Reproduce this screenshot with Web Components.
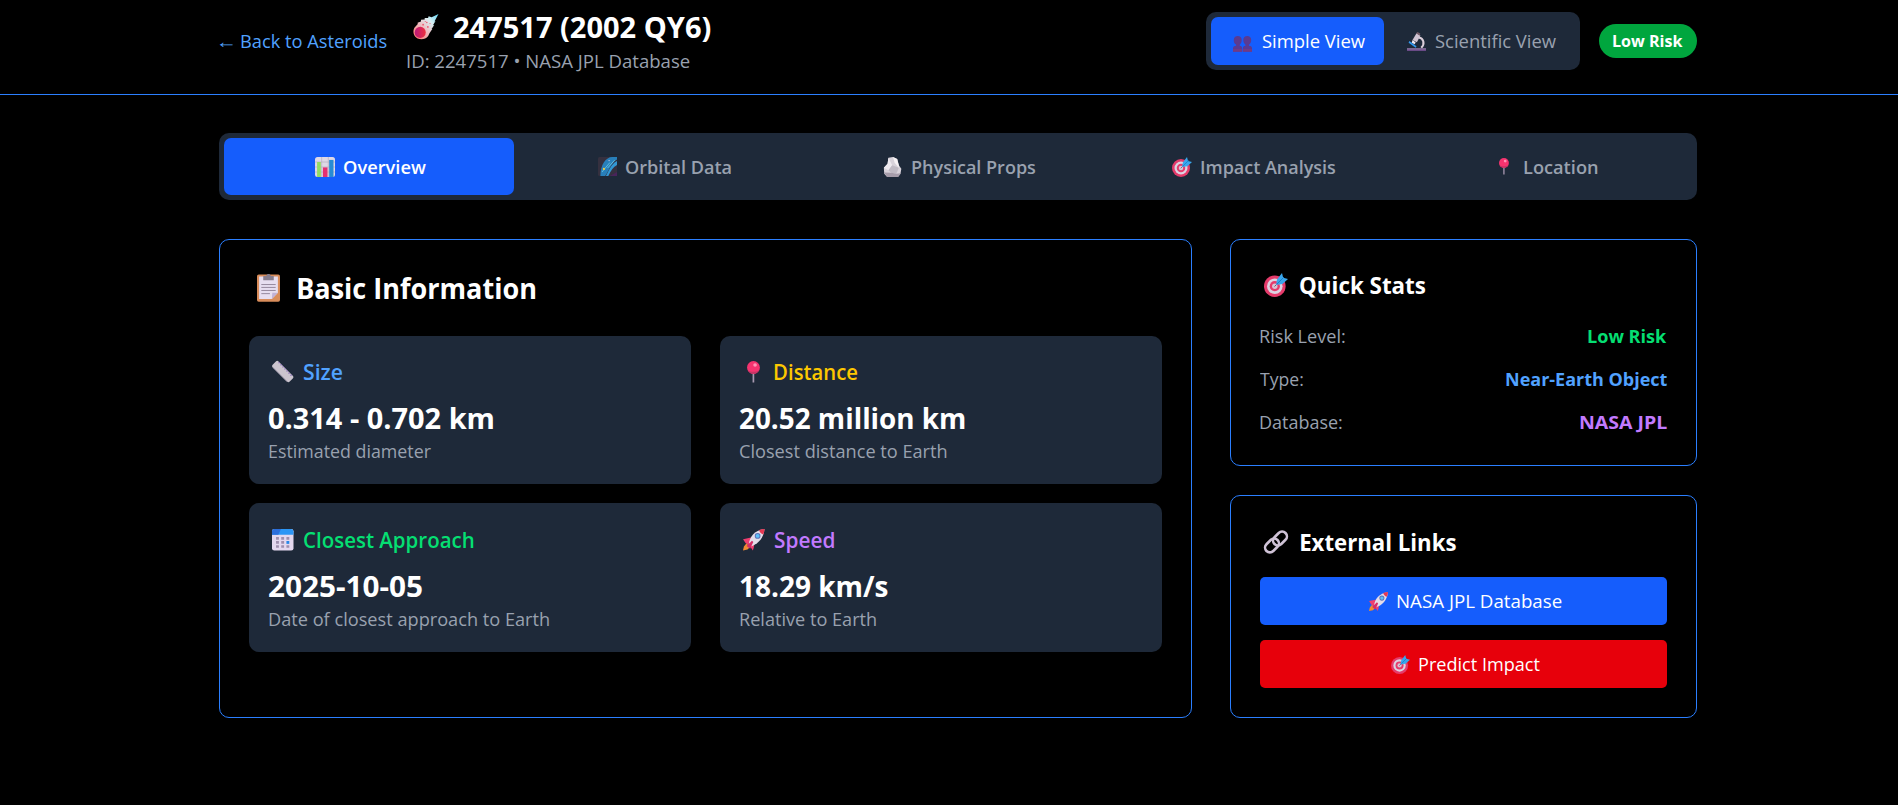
<!DOCTYPE html>
<html lang="en">
<head>
<meta charset="utf-8">
<title>247517 (2002 QY6)</title>
<style>
html,body{margin:0;background:#000}
body{font-family:"Open Sans","Noto Sans",sans-serif;color:#fff;height:805px;overflow:hidden}
</style>
</head>
<body>
<asteroid-page></asteroid-page>
<script>
const ICONS = {
  comet: `<defs><linearGradient id="a" x1="1" y1="0" x2="0" y2="1"><stop stop-color="#5fd4f5"/><stop offset=".3" stop-color="#d9f0f4"/><stop offset=".6" stop-color="#f0b9bd"/><stop offset="1" stop-color="#ff6a5e"/></linearGradient><linearGradient id="b" x1="0" y1=".5" x2="1" y2=".5"><stop stop-color="#b8187c"/><stop offset="1" stop-color="#f0303c"/></linearGradient></defs><path fill="url(#a)" d="M24 0 20.2 7 21.2 6.600 18.800 10.500 20 10.300 17.500 14 18.200 14 15.500 18 14.300 20.700C12 23.600 8 24.600 4.300 23 .6 21.200-.6 16.500 1.300 13L4.500 9.500 4.300 8.300 7.500 7 7.500 5.500 11 5.200 11 3.700 14.200 3.800 14.700 2 17.500 3Z"/><g fill="#f0526b"><circle cx="9.500" cy="10" r=".8"/><circle cx="13" cy="8" r=".7"/><circle cx="14" cy="12.200" r=".8"/><circle cx="11.500" cy="7" r=".5"/><circle cx="16" cy="9" r=".5"/></g><circle cx="6.800" cy="17.300" r="5.200" fill="url(#b)"/>`,
  people: `<g fill="#5a3a92"><path d="M0 20v-4.500c0-2 1.500-3 4-3.300V11C1.500 9.500 1 7.500 1 5 1 1.500 3 0 6 0s5 1.500 5 5c0 2.500-1 4.500-2.500 6v1.200c2 .3 3 1.300 3 3.300V20z"/><path d="M12.500 20v-4.500c0-2 1-3 3.300-3.300V11C14 9.500 13 7.500 13 5c0-3.500 2-5 5-5s5 1.500 5 5c0 2.500-1 4.500-2.800 6v1.200c2.500.3 3.800 1.300 3.800 3.300V20z"/></g><path fill="#7a3a80" d="M0 20v-3.500h11.500V20zM12.500 20v-3.500H24V20z" opacity=".7"/>`,
  micro: `<path d="M15 7c6 1 8 8 3 13" fill="none" stroke="#dccfda" stroke-width="2.600"/><path d="m7 10 5-8.500 5 3-4.500 8.500z" fill="#cfc2d2"/><path d="m11.500 1.500 1.800-1.500 3.500 2-.8 2.700z" fill="#735c68"/><path d="m7 10 4 3.200-1.500 2.300L6 13.500z" fill="#f0e8f0"/><path d="m3 11.500 9 6.500-1 2-9-6.500z" fill="#3399ee"/><path d="M0 20.500h24V24H0z" fill="#967ba9"/><path d="M0 22h24v2H0z" fill="#694a86"/>`,
  chart: `<rect width="24" height="24" rx="3" fill="#ded8e6"/><path d="M8 0v24M16 0v24M0 6h24M0 12h24M0 18h24" stroke="#b5adbd" stroke-width=".8"/><path d="M2.500 6H7v18H2.500z" fill="#94dd62"/><path d="M9.500 12.500H15V24H9.500z" fill="#e62f70"/><path d="M17 3.500h5.200V24H17z" fill="#278bd4"/>`,
  galaxy: `<rect width="24" height="24" rx="2" fill="#35303f"/><path d="M3 24 C3 10 10 0 18 0h6v3C16 8 14 17 9 24Z" fill="#287fba"/><path d="M24 5C16 9 14 17 10 24h3C17 16 19 13 24 10z" fill="#3197d4"/><path d="M5 19 15 7M12 14l9-10" stroke="#65c0df" stroke-width="1.200"/><circle cx="7.500" cy="15" r="1.400" fill="#f1cd42"/><circle cx="14" cy="4.500" r=".8" fill="#dce"/><path d="M15 24h9v-5z" fill="#49245a"/>`,
  rock: `<path d="M6.500 1 12 0l5 2.500 2 7.500 3 4-1 6-3 4H5l-3.500-4L1 13l4.500-5z" fill="#d8d2da"/><path d="m6.500 1 4.500 9-4.500 6L1 13l4.500-5z" fill="#eee9ef"/><path d="m11 10 8 3-3 7-6-1-3.500-3z" fill="#c0bac4"/><path d="m1.200 18.500 8.800.5 6 1 5.500-.5L18 24H5z" fill="#a69caa"/><path d="m12 0 2 7 5 6v-3l-2-7.500z" fill="#f7f2f5"/>`,
  target: `<circle cx="10.800" cy="13.200" r="10.800" fill="#e53b6b"/><circle cx="10.800" cy="13.200" r="7.800" fill="#dcd3e2"/><circle cx="10.800" cy="13.200" r="5.100" fill="#e53b6b"/><circle cx="10.800" cy="13.200" r="2.700" fill="#d8c4d5"/><path d="m10.500 13.500 5-5" stroke="#665b77" stroke-width="1"/><path d="m12 12 1-5.500L18 0l1.200 4.800L24 6l-5.500 5z" fill="#3aa6ec"/><path d="m13 11 7-7" stroke="#167cc5" stroke-width=".9"/>`,
  pin: `<path d="M6.200 13h1.900v11H6.200z" fill="#a899b1"/><circle cx="7.200" cy="7.200" r="7.200" fill="#f5336f"/><path d="M1 10.500c3 2 9 2 12.400 0-3 5-9.500 5-12.400 0" fill="#c43465"/><circle cx="9" cy="4.500" r="2" fill="#ff93b6"/>`,
  clip: `<rect width="24" height="28.500" y=".5" rx="1.800" fill="#d98d5b"/><path d="M2.200 2.500h19.600v17L15.500 26H2.200z" fill="#e7def0"/><path d="M21.800 19.500 15.500 26l.5-6.500z" fill="#c1b2d7"/><path d="M6.500 2h3.200c.5-2.600 4.200-2.600 4.700 0h3.100v4.500h-11z" fill="#867d8d"/><path d="M4.500 11h15M4.500 14h15M4.500 17.200h15M4.500 20.500h9" stroke="#92859b" stroke-width="1"/>`,
  ruler: `<path d="M1 3.800 4.300.6c1-1 2-1 3 0L23.200 16.600c1 1 1 2 0 3l-3.400 3.400c-1 1-2 1-3 0L.8 7c-1-1-1-2 .2-3.200" fill="#cbc4ce"/><path d="m7.500 1.500 15.500 16" stroke="#7b58b2" stroke-width="1.500" stroke-dasharray="1.200 2"/><path d="m1 7.200 16 16" stroke="#afa6b8"/>`,
  calendar: `<rect width="24" height="24" rx="2.600" fill="#e3d8ef"/><path d="M0 6.500V3Q0 0 3 0h18q3 0 3 3v3.500z" fill="#2c96f5"/><path d="M0 6.500V3Q0 0 3 0h7L7 6.500z" fill="#2b6edb"/><path d="M4.500 8.800h3.200V12H4.500zm5.800 0h3.200V12h-3.200zm5.800 0h3.200V12h-3.200zM4.500 13.400h3.200v3.200H4.500zm5.800 0h3.200v3.200h-3.200zM4.500 18h3.200v3H4.500zm5.800 0h3.200v3h-3.200zm5.800 0h3.200v3h-3.200z" fill="#9f8fae"/><path d="M16.100 13.400h3.200v3.200h-3.200z" fill="#2887e8"/>`,
  rocket: `<path d="M1 19.500 4 16l4 4-3 3-5 1z" fill="#f08b33"/><path d="M0 11.500 6.500 10l5-1L13 15l-1 6-1 3-4-6-4-2z" fill="#ee3e70"/><path d="M6.500 17.500C7 9 13 1.500 24 0c-1 11-8 17-15.500 19.500z" fill="#e4dce9"/><path d="M24 0c-2 0-4 .3-6 1.200.5 2.300 2 4 4.600 4.900C23.500 4 24 2 24 0" fill="#e53853"/><circle cx="16.300" cy="7.700" r="3.200" fill="#5b70b8"/><circle cx="16.300" cy="7.700" r="2.100" fill="#5cc0f8"/><path d="m4 19 6-6 1.500 1.500L8 22z" fill="#d52c66"/>`,
  link: `<g fill="none" stroke="#cfc2d6" stroke-width="2.600"><rect x="8.200" y="3.700" width="15.600" height="9.600" rx="4.800" transform="rotate(-45 16 8.500)"/><rect x=".2" y="10.700" width="15.600" height="9.600" rx="4.800" transform="rotate(-45 8 15.500)"/></g>`
};
const BOX = {people:[24,20], clip:[24,29]};

function define(name, css, html, after) {
  customElements.define(name, class extends HTMLElement {
    connectedCallback() {
      if (this.shadowRoot) return;
      const root = this.attachShadow({mode:'open'});
      root.innerHTML = `<style>${css}</style>` + (typeof html === 'function' ? html(this) : html);
      if (after) after(this, root);
    }
  });
}
const at = (el, n) => el.getAttribute(n);

/* Emoji-style pictogram, sized by its "w" attribute. */
define('emoji-icon', `:host{display:block;flex:none}svg{display:block;overflow:visible}`, el => {
  const [bw, bh] = BOX[at(el,'name')] || [24,24], w = +at(el,'w');
  return `<svg width="${w}" height="${w*bh/bw}" viewBox="0 0 ${bw} ${bh}">${ICONS[at(el,'name')]}</svg>`;
});

/* Single line of text whose ink spans exactly "w" pixels. */
const ctx = document.createElement('canvas').getContext('2d');
define('fit-text', `:host{display:block;flex:none;white-space:nowrap}span{display:block;width:0;transform-origin:0 50%}`,
  el => `<span>${at(el,'text')}</span>`, (el, root) => {
    const size = +at(el,'size') || 18.200, weight = at(el,'weight') || 400, w = +at(el,'w');
    el.style.fontSize = size + 'px'; el.style.fontWeight = weight; el.style.width = w + 'px';
    ctx.font = `${weight} ${size}px "Open Sans","Noto Sans",sans-serif`;
    const m = ctx.measureText(at(el,'text'));
    const s = w / (m.actualBoundingBoxRight + m.actualBoundingBoxLeft);
    root.querySelector('span').style.transform = `translateX(${m.actualBoundingBoxLeft*s}px) scaleX(${s})`;
  });

define('risk-badge', `:host{display:flex;align-items:center;justify-content:center;width:98px;height:34px;border-radius:17px;background:#00a63e;line-height:34px}`,
  `<fit-text text="Low Risk" w="70" size="16.800" weight="700"></fit-text>`);

define('view-option', `:host{display:flex;align-items:center;box-sizing:border-box;height:48px;border-radius:7px;color:#99a1af;line-height:48px}
  :host([active]){background:#155dfc;color:#fff}`, `<slot></slot>`);
define('view-toggle', `:host{display:flex;box-sizing:border-box;width:374px;height:58px;padding:5px;border-radius:10px;background:#1e2939}
  .a{width:173px;padding-left:22px}.b{padding-left:23px}.a emoji-icon{margin:5px 9.500px 0 0}.b emoji-icon{margin-right:8.500px}`,
  `<view-option class="a" active><emoji-icon name="people" w="19"></emoji-icon><fit-text text="Simple View" w="103"></fit-text></view-option>
   <view-option class="b"><emoji-icon name="micro" w="19"></emoji-icon><fit-text text="Scientific View" w="121"></fit-text></view-option>`);

define('page-header', `:host{display:block;height:94px;border-bottom:1px solid #2b7fff}
  .in{display:flex;align-items:center;width:1478px;height:82px;margin-left:219px}
  .back{display:flex;gap:8px;color:#51a2ff;line-height:28px}
  .id{margin-left:20px;flex:1;padding-top:1px}
  .t{display:flex;align-items:center;height:36px;line-height:36px;padding-left:6px;gap:16px}
  .s{color:#99a1af;line-height:26px;margin:3px 0 0 .5px}risk-badge{margin-left:19px}`,
  `<div class="in"><div class="back"><fit-text text="←" w="14"></fit-text><fit-text text="Back to Asteroids" w="145.500"></fit-text></div>
   <div class="id"><div class="t"><emoji-icon name="comet" w="25.500"></emoji-icon><fit-text text="247517 (2002 QY6)" w="256.500" size="29" weight="700"></fit-text></div>
   <fit-text class="s" text="ID: 2247517 • NASA JPL Database" w="283"></fit-text></div>
   <view-toggle></view-toggle><risk-badge></risk-badge></div>`);

define('tab-item', `:host{flex:1;display:flex;align-items:center;justify-content:center;border-radius:7px;color:#99a1af;line-height:57px}
  :host([active]){background:#155dfc;color:#fff}emoji-icon{margin:0 8.600px 0 3px}fit-text{margin-top:2px}`,
  el => `<emoji-icon name="${at(el,'icon')}" w="${at(el,'iw')||20}"></emoji-icon><fit-text text="${at(el,'label')}" w="${at(el,'w')}" weight="600"></fit-text>`);
define('tab-bar', `:host{display:flex;gap:4.800px;box-sizing:border-box;height:67px;padding:5px;border-radius:10px;background:#1e2939}`,
  `<tab-item active icon="chart" label="Overview" w="82"></tab-item>
   <tab-item icon="galaxy" iw="19" label="Orbital Data" w="105.500"></tab-item>
   <tab-item icon="rock" label="Physical Props" w="124"></tab-item>
   <tab-item icon="target" label="Impact Analysis" w="135"></tab-item>
   <tab-item icon="pin" iw="16.500" label="Location" w="74"></tab-item>`);

define('panel-card', `:host{display:block;box-sizing:border-box;border:1px solid #2b7fff;border-radius:10px;padding:29px}`, `<slot></slot>`);

define('stat-tile', `:host{display:block;box-sizing:border-box;height:148px;padding:19px 19.500px;border-radius:10px;background:#1e2939}
  .l{display:flex;align-items:center;height:33px;line-height:33px;padding-left:3.500px;gap:10.500px}
  .v{line-height:36px;margin-top:12px;color:#fff}.s{line-height:27px;margin-top:2px;color:#99a1af}
  :host([low]){height:149px;padding-top:20px}`,
  el => `<div class="l" style="color:${at(el,'tone')}"><emoji-icon name="${at(el,'icon')}" w="21.500" style="margin-left:${at(el,'dx')||0}px;margin-right:${-(at(el,'dx')||0)}px"></emoji-icon><fit-text text="${at(el,'label')}" w="${at(el,'lw')}" size="21.600" weight="600"></fit-text></div>
   <fit-text class="v" text="${at(el,'value')}" w="${at(el,'vw')}" size="29" weight="700"></fit-text>
   <fit-text class="s" text="${at(el,'note')}" w="${at(el,'nw')}"></fit-text>`);

define('basic-info', `:host{display:block;width:973px}panel-card{height:479px}
  .t{display:flex;align-items:center;height:38px;line-height:38px;padding-left:8px;gap:17.500px}
  .g{display:grid;grid-template-columns:442px 442px;gap:19px 29px;margin-top:29px}`,
  `<panel-card><div class="t"><emoji-icon name="clip" w="23"></emoji-icon><fit-text text="Basic Information" w="237" size="29" weight="700"></fit-text></div>
   <div class="g">
   <stat-tile icon="ruler" tone="#51a2ff" label="Size" lw="38.500" value="0.314 - 0.702 km" vw="224.500" note="Estimated diameter" nw="162.500"></stat-tile>
   <stat-tile icon="pin" dx="3.500" tone="#fdc700" label="Distance" lw="82.500" value="20.52 million km" vw="225" note="Closest distance to Earth" nw="206.500"></stat-tile>
   <stat-tile low icon="calendar" tone="#05df72" label="Closest Approach" lw="170" value="2025-10-05" vw="153.500" note="Date of closest approach to Earth" nw="280"></stat-tile>
   <stat-tile low icon="rocket" tone="#c27aff" label="Speed" lw="59" value="18.29 km/s" vw="148" note="Relative to Earth" nw="136"></stat-tile>
   </div></panel-card>`);

define('side-title', `:host{display:flex;align-items:center;height:33px;line-height:33px;padding-left:4px;gap:12px}`,
  el => `<emoji-icon name="${at(el,'icon')}" w="24"></emoji-icon><fit-text text="${at(el,'text')}" w="${at(el,'w')}" size="24" weight="700"></fit-text>`);

define('stat-row', `:host{display:flex;justify-content:space-between;height:43px;line-height:43px}.k{color:#99a1af}`,
  el => `<fit-text class="k" text="${at(el,'k')}" w="${at(el,'kw')}"></fit-text><fit-text style="color:${at(el,'tone')}" text="${at(el,'v')}" w="${at(el,'vw')}" weight="700"></fit-text>`);

define('quick-stats', `:host{display:block}panel-card{height:227px}side-title{height:32px;line-height:32px}.r{margin-top:13.500px}`,
  `<panel-card><side-title icon="target" text="Quick Stats" w="126"></side-title><div class="r">
   <stat-row k="Risk Level:" kw="85" v="Low Risk" vw="79" tone="#05df72"></stat-row>
   <stat-row k="Type:" kw="43" v="Near-Earth Object" vw="161.500" tone="#51a2ff"></stat-row>
   <stat-row k="Database:" kw="82" v="NASA JPL" vw="87" tone="#c27aff"></stat-row></div></panel-card>`);

define('link-button', `:host{display:flex;align-items:center;justify-content:center;height:48px;line-height:49px;border-radius:5px}emoji-icon{margin:0 9px 0 4px}`,
  el => `<emoji-icon name="${at(el,'icon')}" w="19"></emoji-icon><fit-text text="${at(el,'text')}" w="${at(el,'w')}"></fit-text>`);

define('external-links', `:host{display:block}panel-card{height:223px}side-title{gap:12.500px}.b{display:grid;gap:15px;margin-top:19px}
  .nasa{background:#155dfc}.hit{background:#e7000b}`,
  `<panel-card><side-title icon="link" text="External Links" w="155.500"></side-title><div class="b">
   <link-button class="nasa" icon="rocket" text="NASA JPL Database" w="165"></link-button>
   <link-button class="hit" icon="target" text="Predict Impact" w="121.500"></link-button></div></panel-card>`);

define('asteroid-page', `:host{display:block}
  main{width:1478px;margin:38px 0 0 219px}.cols{display:flex;justify-content:space-between;margin-top:39px}
  aside{display:flex;flex-direction:column;gap:29px;width:467px}`,
  `<page-header></page-header><main><tab-bar></tab-bar><div class="cols"><basic-info></basic-info>
   <aside><quick-stats></quick-stats><external-links></external-links></aside></div></main>`);
</script>
</body>
</html>
